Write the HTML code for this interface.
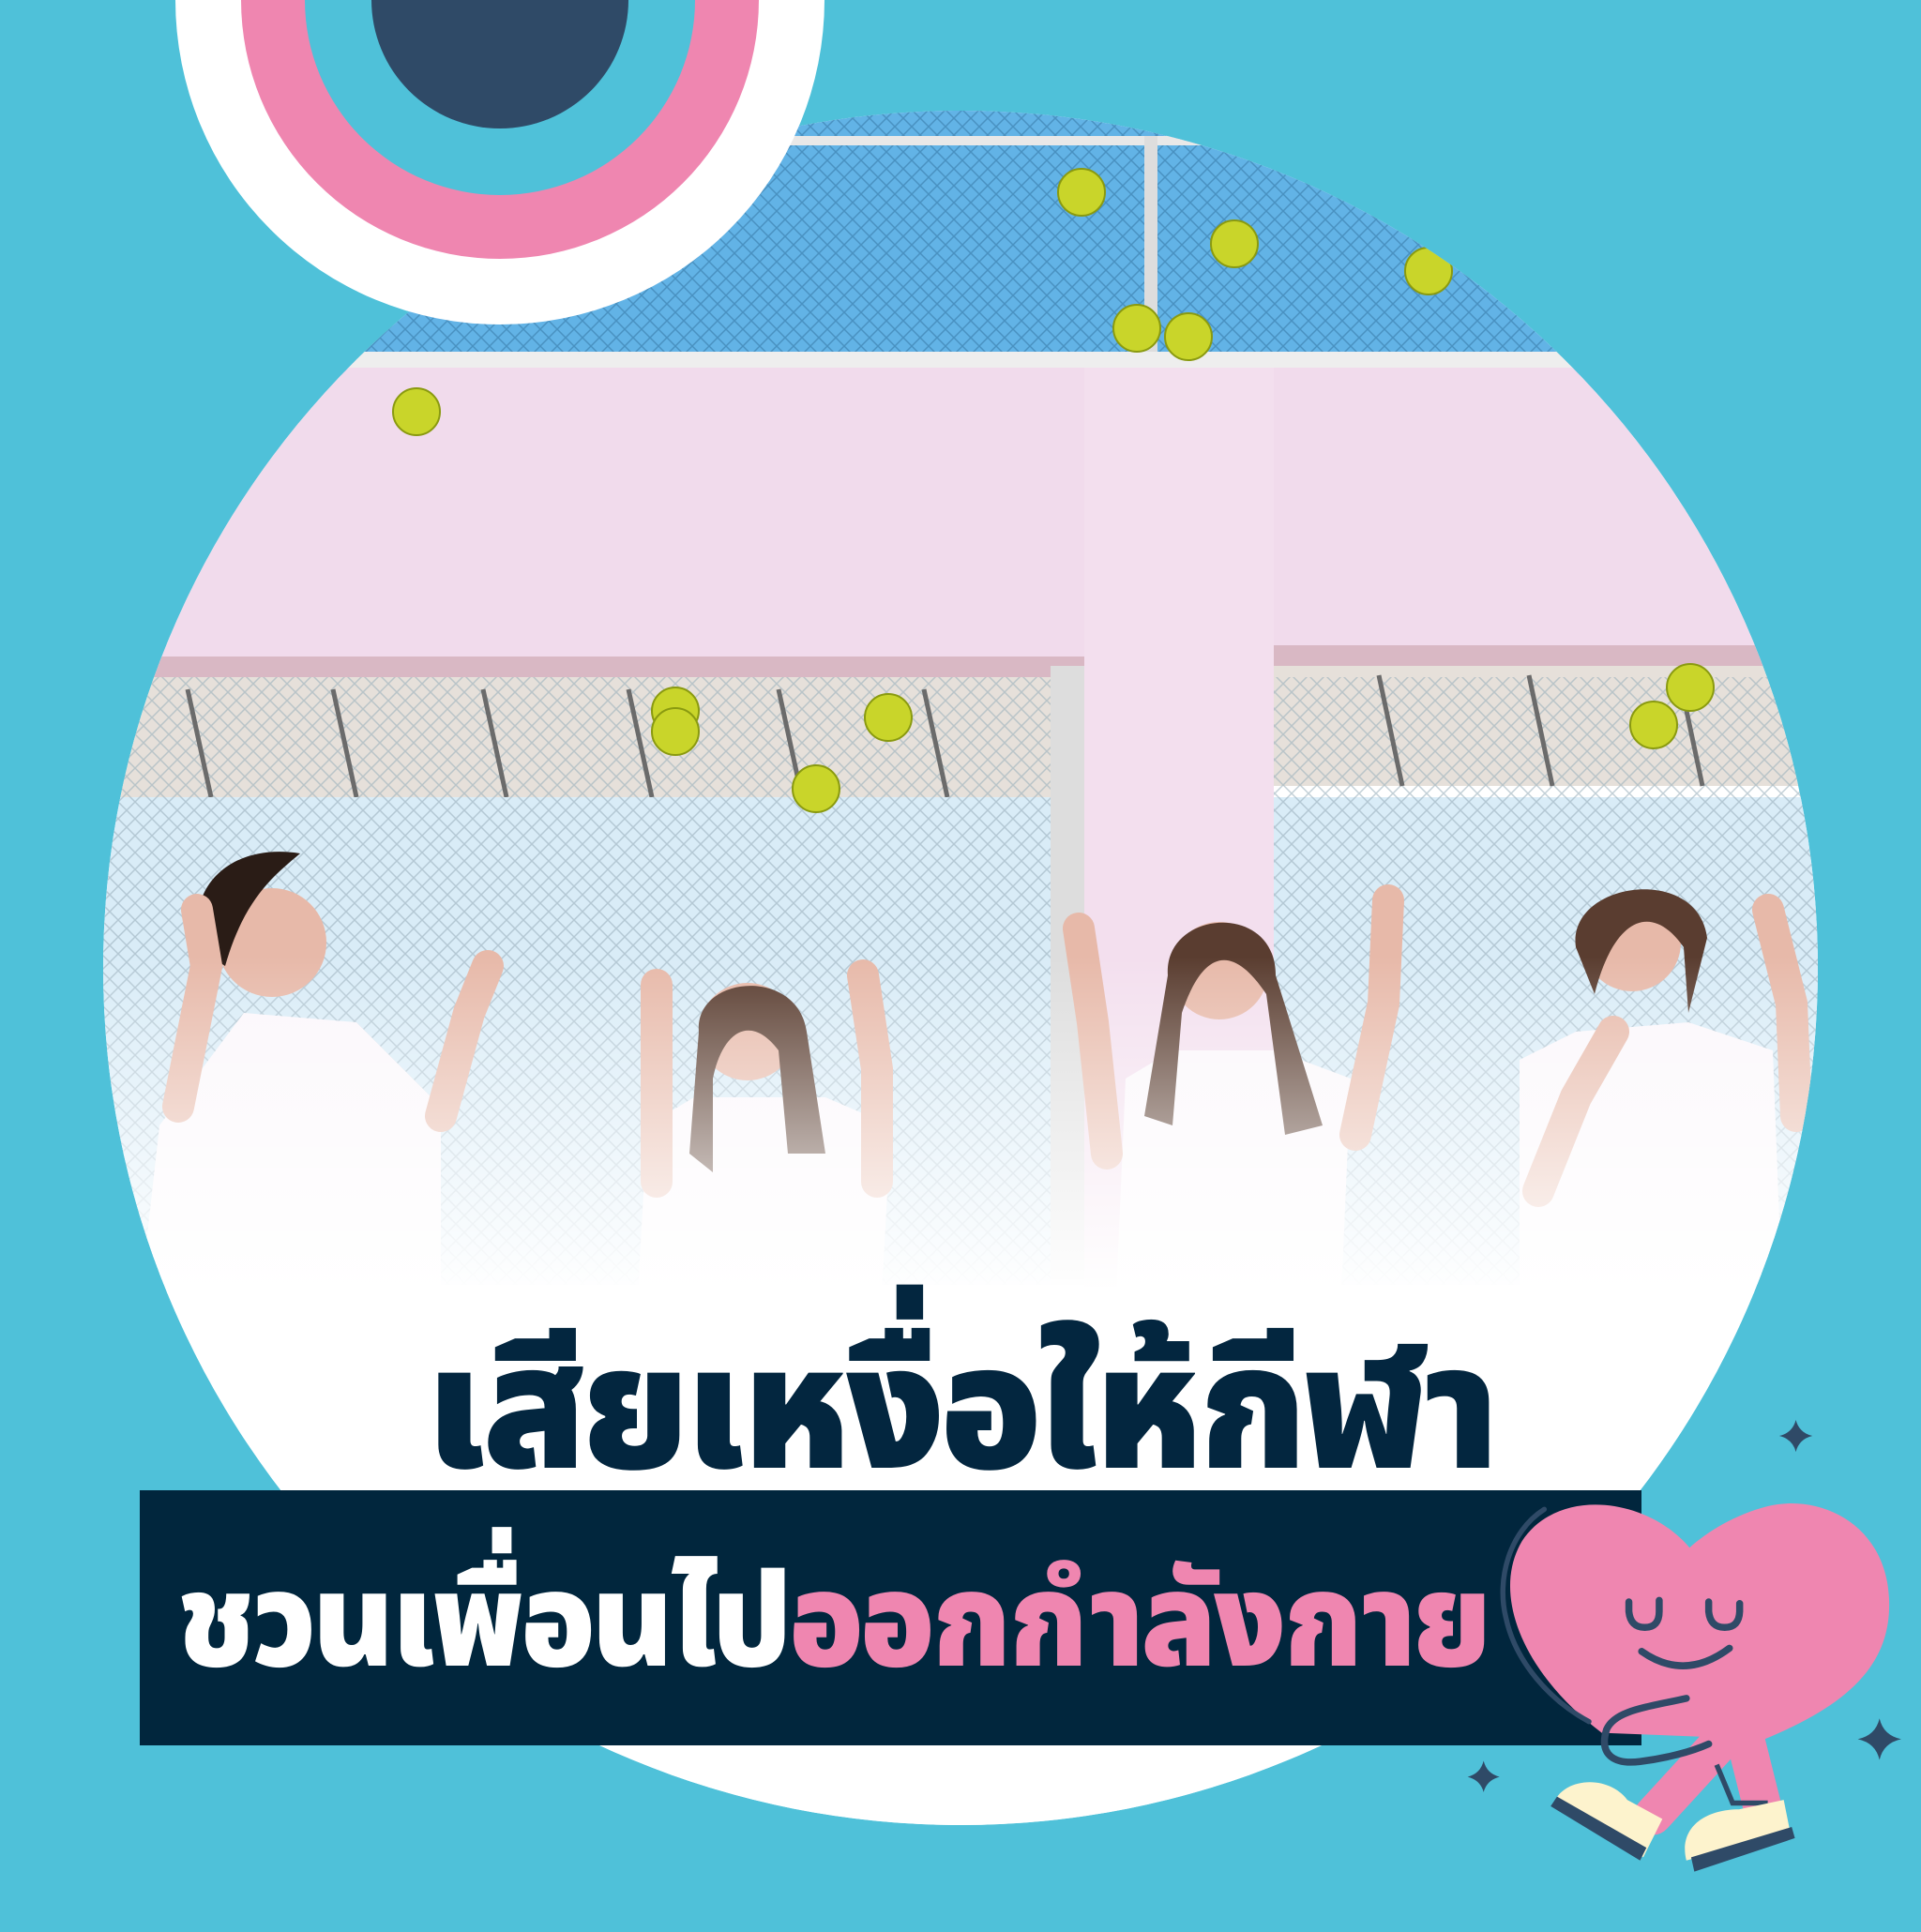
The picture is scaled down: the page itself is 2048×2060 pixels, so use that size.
<!DOCTYPE html>
<html><head><meta charset="utf-8"><style>
html,body{margin:0;padding:0}
body{width:2048px;height:2048px;background:#4fc1d9;position:relative;overflow:hidden;font-family:"Liberation Sans","Noto Sans Thai","Loma","Garuda",sans-serif}
.t1{position:absolute;left:0;width:2048px;top:1410px;text-align:center;font-size:185px;font-weight:900;color:#03263f;line-height:1;letter-spacing:-4px;transform:scaleX(0.96)}
.box{position:absolute;left:149px;top:1589px;width:1601px;height:272px;background:#01263d}
.t2{position:absolute;left:189px;top:1658px;font-size:140px;font-weight:900;color:#fff;line-height:1;white-space:nowrap;letter-spacing:-3px;transform:scaleX(0.93);transform-origin:left top}
.t2 span{color:#ef86b0}
</style></head><body>
<svg width="2048" height="2048" style="position:absolute;left:0;top:0">
<defs>
<clipPath id="c"><circle cx="1024" cy="1032" r="914"/></clipPath>
<linearGradient id="fade" x1="0" y1="0" x2="0" y2="1">
<stop offset="0" stop-color="#fff" stop-opacity="0"/><stop offset="1" stop-color="#fff" stop-opacity="1"/></linearGradient>
<pattern id="mesh" width="18" height="18" patternUnits="userSpaceOnUse">
<path d="M0 9 L9 0 L18 9 L9 18Z" fill="none" stroke="#9bb0bd" stroke-width="1.5" opacity="0.6"/></pattern>
<pattern id="mesh2" width="18" height="18" patternUnits="userSpaceOnUse">
<path d="M0 9 L9 0 L18 9 L9 18Z" fill="none" stroke="#2f6f9c" stroke-width="1.5" opacity="0.5"/></pattern>
</defs>
<g clip-path="url(#c)">
<rect x="0" y="0" width="2048" height="2048" fill="#fff"/>
<rect x="0" y="100" width="2048" height="300" fill="#62b3e6"/>
<rect x="0" y="100" width="2048" height="300" fill="url(#mesh2)"/>
<rect x="0" y="145" width="2048" height="10" fill="#e8e8e8"/>
<rect x="1220" y="145" width="14" height="250" fill="#ddd"/>
<rect x="0" y="375" width="2048" height="18" fill="#eee"/>
<rect x="0" y="392" width="2048" height="320" fill="#f1dbec"/>
<rect x="0" y="700" width="1160" height="22" fill="#d9b8c4"/>
<rect x="1358" y="688" width="700" height="22" fill="#d9b8c4"/>
<rect x="0" y="722" width="1140" height="128" fill="#e6e0da"/>
<rect x="1358" y="710" width="700" height="128" fill="#e6e0da"/>
<rect x="0" y="722" width="2048" height="128" fill="url(#mesh)"/>
<g stroke="#6b6b6b" stroke-width="5">
<path d="M200 735L225 850M355 735L380 850M515 735L540 850M670 735L695 850M830 735L855 850M985 735L1010 850M1470 720L1495 838M1630 720L1655 838M1790 720L1815 838"/></g>
<rect x="0" y="850" width="2048" height="520" fill="#d9ecf7"/>
<rect x="0" y="850" width="2048" height="520" fill="url(#mesh)"/>
<rect x="1156" y="392" width="202" height="980" fill="#f3dfee"/>
<rect x="1120" y="710" width="36" height="660" fill="#ddd"/>
<g fill="#c9d52a" stroke="#8a9a10" stroke-width="2">
<circle cx="1153" cy="205" r="25"/><circle cx="1316" cy="260" r="25"/><circle cx="1523" cy="289" r="25"/><circle cx="1212" cy="350" r="25"/><circle cx="1267" cy="359" r="25"/><circle cx="444" cy="439" r="25"/><circle cx="720" cy="758" r="25"/><circle cx="720" cy="780" r="25"/><circle cx="947" cy="765" r="25"/><circle cx="870" cy="841" r="25"/><circle cx="1802" cy="733" r="25"/><circle cx="1763" cy="773" r="25"/></g>
<g fill="#e7b9a9">
<path d="M170 1200 L150 1380 L470 1380 L470 1180 L380 1090 L260 1080Z" fill="#fbf7fb"/>
<path d="M690 1200 L680 1380 L940 1380 L950 1200 L880 1170 L740 1170Z" fill="#fbf7fb"/>
<path d="M1200 1150 L1190 1380 L1430 1380 L1440 1150 L1360 1120 L1250 1120Z" fill="#fbf7fb"/>
<path d="M1620 1130 L1620 1380 L1900 1380 L1890 1120 L1800 1090 L1680 1100Z" fill="#fbf7fb"/>
<circle cx="290" cy="1005" r="58"/><circle cx="797" cy="1100" r="52"/><circle cx="1300" cy="1035" r="52"/><circle cx="1740" cy="1005" r="52"/>
</g>
<g fill="#2a1c16"><path d="M210 1010 C200 930 260 900 320 910 C290 935 260 960 240 1030Z"/></g>
<g fill="#5a3d30"><path d="M745 1100 C740 1040 850 1030 860 1100 L880 1230 L840 1230 L830 1120 C800 1080 770 1100 760 1150 L760 1250 L735 1230Z"/>
<path d="M1245 1040 C1240 970 1360 960 1360 1040 L1410 1200 L1370 1210 L1350 1060 C1310 1000 1280 1020 1260 1080 L1250 1200 L1220 1190Z"/>
<path d="M1680 1010 C1670 940 1810 920 1820 1000 L1800 1080 L1795 1010 C1760 960 1720 980 1700 1060Z"/></g>
<g stroke="#e7b9a9" stroke-width="34" stroke-linecap="round" fill="none">
<path d="M190 1180 L220 1030 L210 970"/><path d="M470 1190 L500 1080 L520 1030"/>
<path d="M700 1260 L700 1140 L700 1050"/><path d="M935 1260 L935 1140 L920 1040"/>
<path d="M1180 1230 L1165 1090 L1150 990"/><path d="M1445 1210 L1475 1070 L1480 960"/>
<path d="M1640 1270 L1680 1170 L1720 1100"/><path d="M1915 1190 L1910 1070 L1885 970"/></g>
<rect x="0" y="1020" width="2048" height="360" fill="url(#fade)"/>
<rect x="0" y="1375" width="2048" height="700" fill="#fff"/>
</g>
<circle cx="533" cy="0" r="346" fill="#fff"/>
<circle cx="533" cy="0" r="276" fill="#ef86b0"/>
<circle cx="533" cy="0" r="208" fill="#4fc1d9"/>
<circle cx="533" cy="0" r="137" fill="#2f4a67"/>
</svg>
<div class="t1">เสียเหงื่อให้กีฬา</div>
<div class="box"></div>
<div class="t2">ชวนเพื่อนไป<span>ออกกำลังกาย</span></div>
<svg width="560" height="580" viewBox="0 0 1644 1704" style="position:absolute;left:1510px;top:1480px">
<g fill="#2f4a67">
<path d="M1188 100 Q1198 140 1240 150 Q1198 160 1188 200 Q1178 160 1136 150 Q1178 140 1188 100Z"/>
<path d="M1450 1035 Q1462 1088 1518 1100 Q1462 1112 1450 1165 Q1438 1112 1382 1100 Q1438 1088 1450 1035Z"/>
<path d="M210 1168 Q220 1208 260 1218 Q220 1228 210 1266 Q200 1228 160 1218 Q200 1208 210 1168Z"/>
</g>
<g stroke="#ef86b0" stroke-width="120" stroke-linecap="round" fill="none"><path d="M960 1100 L740 1340"/><path d="M1030 1100 L1080 1300"/></g>
<path d="M940 1180 L990 1300 L1100 1300" fill="none" stroke="#2f4a67" stroke-width="16"/>
<path d="M855 500 C720 340 440 310 330 480 C230 650 340 900 580 1080 L1090 1100 C1330 1000 1490 880 1480 660 C1470 430 1270 330 1100 370 C1000 395 910 450 855 500Z" fill="#ef86b0"/>
<path d="M400 380 C290 450 250 600 280 720 C310 860 420 980 540 1045" fill="none" stroke="#2f4a67" stroke-width="16" stroke-linecap="round"/>
<g fill="none" stroke="#2f4a67" stroke-width="22" stroke-linecap="round">
<path d="M665 670 L665 700 Q670 750 715 750 Q760 750 760 700 L760 665"/>
<path d="M915 670 L915 700 Q920 750 965 750 Q1010 750 1012 700 L1012 675"/>
<path d="M705 825 Q840 920 980 815"/>
<path d="M845 972 C720 1000 620 1010 595 1070 C570 1150 620 1180 700 1170 C780 1160 860 1140 915 1115"/>
</g>
<path d="M430 1300 C460 1220 600 1210 660 1290 L770 1350 L710 1470Z" fill="#fdf3cd"/>
<path d="M420 1310 L700 1480 L720 1440 L440 1280Z" fill="#2f4a67"/>
<path d="M845 1480 C820 1380 900 1320 1010 1320 L1150 1290 L1170 1390Z" fill="#fdf3cd"/>
<path d="M860 1470 L1175 1375 L1185 1410 L870 1515Z" fill="#2f4a67"/>
</svg>
</body></html>
